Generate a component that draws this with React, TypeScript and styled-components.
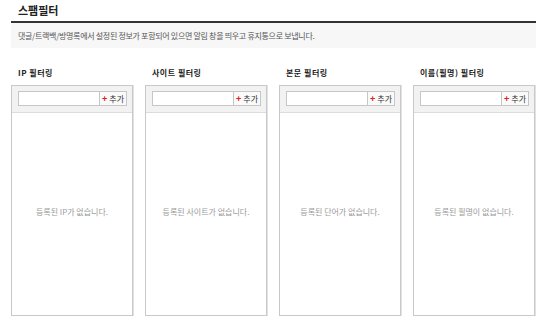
import React from "react";
import styled, { createGlobalStyle } from "styled-components";

const Global = createGlobalStyle`
  html, body { margin: 0; padding: 0; background: #fff; }
  body { font-family: "Noto Sans CJK KR", "Noto Sans", sans-serif; color: #333; }
`;

const Page = styled.div`
  padding: 0 11px;
`;

const Title = styled.h2`
  margin: 0;
  height: 21px;
  padding-left: 7px;
  font-size: 11px;
  font-weight: 700;
  line-height: 21px;
  color: #222;
  border-bottom: 2px solid #333;
`;

const Desc = styled.p`
  margin: 0;
  height: 25px;
  padding-left: 7px;
  background: #f7f7f7;
  font-size: 8px;
  line-height: 25px;
  color: #555;
  letter-spacing: -0.3px;
`;

const Grid = styled.div`
  display: grid;
  grid-template-columns: repeat(4, 122px);
  column-gap: 12px;
  margin-top: 18px;
`;

const Column = styled.section`
  display: flex;
  flex-direction: column;
`;

const Heading = styled.h3`
  margin: 0 0 5px;
  padding-left: 7px;
  height: 14px;
  font-size: 8px;
  font-weight: 700;
  line-height: 14px;
  letter-spacing: 0.5px;
  color: #222;
`;

const Panel = styled.div`
  height: 229px;
  border: 1px solid #c9c9c9;
  box-shadow: 0 1px 0 #e2e2e2, 1px 0 0 #e2e2e2;
  display: flex;
  flex-direction: column;
  background: #fff;
`;

const PanelHead = styled.div`
  display: flex;
  padding: 5px 5px 6px 6px;
  background: #f2f2f2;
  border-bottom: 1px solid #dcdcdc;
`;

const Input = styled.input`
  flex: 1;
  min-width: 0;
  height: 15px;
  box-sizing: border-box;
  margin: 0;
  border: 1px solid #c6c6c6;
  border-right: none;
  background: #fff;
  padding: 0 3px;
  font-size: 8px;
  font-family: inherit;
  outline: none;
`;

const AddButton = styled.button`
  display: flex;
  align-items: center;
  justify-content: center;
  gap: 2px;
  height: 15px;
  width: 28px;
  flex: none;
  box-sizing: border-box;
  margin: 0;
  padding: 0;
  border: 1px solid #c6c6c6;
  background: #fafafa;
  font-family: inherit;
  font-size: 8px;
  line-height: 1;
  white-space: nowrap;
  color: #333;
  cursor: pointer;
`;

const Plus = styled.span`
  color: #e02020;
  font-weight: 700;
  font-size: 9px;
  line-height: 1;
`;

const Empty = styled.div`
  flex: 1;
  display: flex;
  align-items: center;
  justify-content: center;
  padding-bottom: 5px;
  font-size: 8px;
  color: #999;
`;

const filters = [
  { title: "IP 필터링", empty: "등록된 IP가 없습니다." },
  { title: "사이트 필터링", empty: "등록된 사이트가 없습니다." },
  { title: "본문 필터링", empty: "등록된 단어가 없습니다." },
  { title: "이름(필명) 필터링", empty: "등록된 필명이 없습니다." },
];

export default function App() {
  return (
    <>
      <Global />
      <Page>
        <Title>스팸필터</Title>
        <Desc>댓글/트랙백/방명록에서 설정된 정보가 포함되어 있으면 알림 창을 띄우고 휴지통으로 보냅니다.</Desc>
        <Grid>
          {filters.map((f) => (
            <Column key={f.title}>
              <Heading>{f.title}</Heading>
              <Panel>
                <PanelHead>
                  <Input type="text" />
                  <AddButton type="button">
                    <Plus>+</Plus>추가
                  </AddButton>
                </PanelHead>
                <Empty>{f.empty}</Empty>
              </Panel>
            </Column>
          ))}
        </Grid>
      </Page>
    </>
  );
}
